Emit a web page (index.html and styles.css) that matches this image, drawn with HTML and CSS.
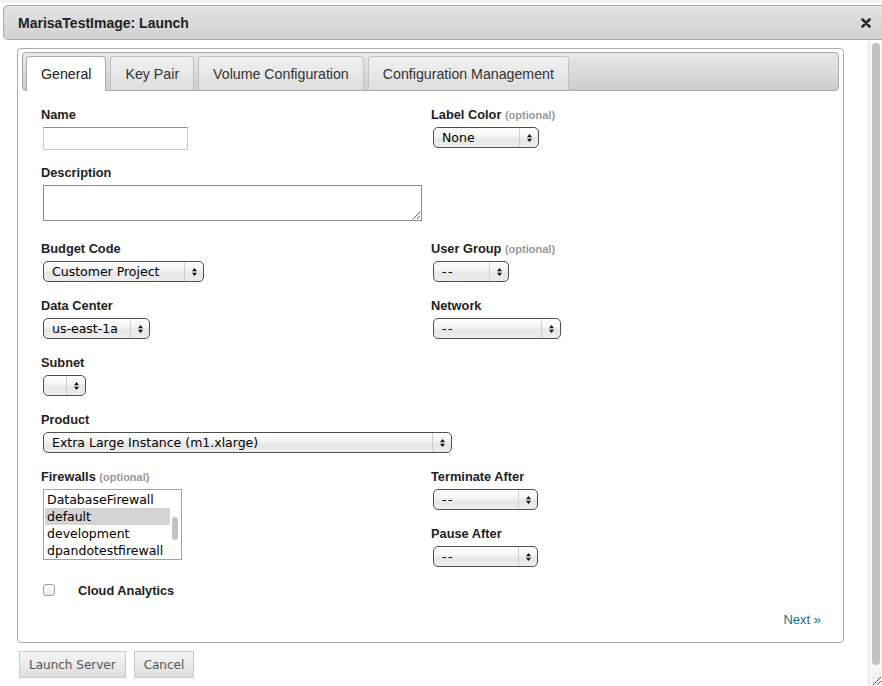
FILE: index.html
```html
<!DOCTYPE html>
<html>
<head>
<meta charset="utf-8">
<title>MarisaTestImage: Launch</title>
<link rel="stylesheet" href="styles.css">
</head>
<body>
<div class="top-strip"></div>
<div class="titlebar">
  <span class="title">MarisaTestImage: Launch</span>
  <svg class="close" width="10" height="10" viewBox="0 0 10 10"><path d="M1.5 1.5 L8.5 8.5 M8.5 1.5 L1.5 8.5" stroke="#2b2b2b" stroke-width="2.6" stroke-linecap="round"/></svg>
</div>
<div class="main">
  <div class="content">
    <div class="panel">
      <div class="tabbar">
        <div class="tab active">General</div>
        <div class="tab">Key Pair</div>
        <div class="tab">Volume Configuration</div>
        <div class="tab">Configuration Management</div>
      </div>
      <div class="form">
        <div class="row r1">
          <div class="col-l">
            <div class="lbl">Name</div>
            <input class="text-in" type="text">
          </div>
          <div class="col-r">
            <div class="lbl">Label Color <span class="opt">(optional)</span></div>
            <div class="sel w-label"><span class="val">None</span><span class="arr"><svg width="7" height="10" viewBox="0 0 7 10"><path d="M3.5 1 L6 4.3 H1 Z M1 5.7 H6 L3.5 9 Z" fill="#111"/></svg></span></div>
          </div>
        </div>
        <div class="row r2">
          <div class="col-l">
            <div class="lbl">Description</div>
            <textarea class="desc"></textarea>
          </div>
        </div>
        <div class="row">
          <div class="col-l">
            <div class="lbl">Budget Code</div>
            <div class="sel w-budget"><span class="val">Customer Project</span><span class="arr"><svg width="7" height="10" viewBox="0 0 7 10"><path d="M3.5 1 L6 4.3 H1 Z M1 5.7 H6 L3.5 9 Z" fill="#111"/></svg></span></div>
          </div>
          <div class="col-r">
            <div class="lbl">User Group <span class="opt">(optional)</span></div>
            <div class="sel w-group"><span class="val dash">--</span><span class="arr"><svg width="7" height="10" viewBox="0 0 7 10"><path d="M3.5 1 L6 4.3 H1 Z M1 5.7 H6 L3.5 9 Z" fill="#111"/></svg></span></div>
          </div>
        </div>
        <div class="row">
          <div class="col-l">
            <div class="lbl">Data Center</div>
            <div class="sel w-dc"><span class="val">us-east-1a</span><span class="arr"><svg width="7" height="10" viewBox="0 0 7 10"><path d="M3.5 1 L6 4.3 H1 Z M1 5.7 H6 L3.5 9 Z" fill="#111"/></svg></span></div>
          </div>
          <div class="col-r">
            <div class="lbl">Network</div>
            <div class="sel w-net"><span class="val dash">--</span><span class="arr"><svg width="7" height="10" viewBox="0 0 7 10"><path d="M3.5 1 L6 4.3 H1 Z M1 5.7 H6 L3.5 9 Z" fill="#111"/></svg></span></div>
          </div>
        </div>
        <div class="row">
          <div class="col-l">
            <div class="lbl">Subnet</div>
            <div class="sel w-subnet"><span class="val"></span><span class="arr"><svg width="7" height="10" viewBox="0 0 7 10"><path d="M3.5 1 L6 4.3 H1 Z M1 5.7 H6 L3.5 9 Z" fill="#111"/></svg></span></div>
          </div>
        </div>
        <div class="row r6">
          <div class="col-full">
            <div class="lbl">Product</div>
            <div class="sel w-product"><span class="val">Extra Large Instance (m1.xlarge)</span><span class="arr"><svg width="7" height="10" viewBox="0 0 7 10"><path d="M3.5 1 L6 4.3 H1 Z M1 5.7 H6 L3.5 9 Z" fill="#111"/></svg></span></div>
          </div>
        </div>
        <div class="row r7">
          <div class="col-l">
            <div class="lbl">Firewalls <span class="opt">(optional)</span></div>
            <div class="listbox">
              <div class="lb-items">
                <div class="lb-item">DatabaseFirewall</div>
                <div class="lb-item selected">default</div>
                <div class="lb-item">development</div>
                <div class="lb-item">dpandotestfirewall</div>
              </div>
              <div class="lb-track"><div class="lb-thumb"></div></div>
            </div>
          </div>
          <div class="col-r">
            <div class="lbl">Terminate After</div>
            <div class="sel w-term"><span class="val dash">--</span><span class="arr"><svg width="7" height="10" viewBox="0 0 7 10"><path d="M3.5 1 L6 4.3 H1 Z M1 5.7 H6 L3.5 9 Z" fill="#111"/></svg></span></div>
            <div class="lbl lbl-gap">Pause After</div>
            <div class="sel w-term"><span class="val dash">--</span><span class="arr"><svg width="7" height="10" viewBox="0 0 7 10"><path d="M3.5 1 L6 4.3 H1 Z M1 5.7 H6 L3.5 9 Z" fill="#111"/></svg></span></div>
          </div>
        </div>
        <div class="row check-row">
          <span class="checkbox"></span>
          <span class="check-lbl">Cloud Analytics</span>
        </div>
        <div class="next-row"><a class="next">Next »</a></div>
      </div>
    </div>
    <div class="buttons">
      <button class="btn">Launch Server</button>
      <button class="btn">Cancel</button>
    </div>
  </div>
  <div class="vscroll">
    <div class="vthumb"></div>
    <svg class="grip" width="12" height="12" viewBox="0 0 12 12"><path d="M11 3 L3 11 M11 7 L7 11" stroke="#555" stroke-width="1"/></svg>
  </div>
</div>
</body>
</html>
```
FILE: styles.css
```css
* { box-sizing: border-box; }
html, body { margin: 0; padding: 0; }
body {
  width: 882px;
  height: 686px;
  overflow: hidden;
  background: #fff;
  font-family: "Liberation Sans", Arial, sans-serif;
  color: #222;
}
.top-strip {
  height: 5px;
  border-top: 3px solid #f3f3f3;
}
.titlebar {
  margin-left: 3px;
  height: 35px;
  border: 1px solid #a9a9a9;
  border-right: none;
  border-radius: 5px 0 0 5px;
  background: linear-gradient(#e4e4e4, #d1d1d1);
  display: flex;
  align-items: center;
  justify-content: space-between;
  padding: 0 11px 0 14px;
}
.title {
  font-weight: bold;
  font-size: 14px;
  color: #222;
}
.close { display: block; margin-top: 1px; }
.main {
  display: flex;
  height: 646px;
}
.content {
  flex: 1;
  padding: 8px 0 0 17px;
}
.panel {
  width: 827px;
  border: 1px solid #aaa;
  border-radius: 4px;
  padding: 3px 4px 0;
}
.tabbar {
  display: flex;
  align-items: flex-end;
  gap: 4px;
  height: 39px;
  padding: 3px 3px 0;
  border: 1px solid #aaa;
  border-radius: 4px;
  background: linear-gradient(#e9e9e9, #cdcdcd);
}
.tab {
  height: 34px;
  padding: 0 14px;
  display: flex;
  align-items: center;
  font-size: 14.2px;
  color: #333;
  border: 1px solid #c2c2c2;
  border-bottom: none;
  border-radius: 4px 4px 0 0;
  background: linear-gradient(#f1f1f1, #dedede);
}
.tab.active {
  height: 35px;
  margin-bottom: -1px;
  background: #fff;
  border-color: #aaa;
  color: #222;
}
.form {
  padding: 14px 18px 14px 19px;
}
.row { display: flex; margin-bottom: 14px; }
.r1 { margin-bottom: 13px; }
.r2 { margin-bottom: 18px; }
.r6 { margin-bottom: 14px; }
.r7 { margin-bottom: 16px; }
.col-l { width: 390px; }
.col-r { flex: 1; }
.lbl {
  height: 18px;
  font-size: 12.8px;
  font-weight: bold;
  line-height: 17px;
  padding-top: 1px;
  margin-bottom: 4px;
  color: #222;
  white-space: nowrap;
}
.lbl-gap { margin-top: 14px; }
.opt {
  font-size: 11px;
  line-height: 10px;
  color: #999;
}
.text-in {
  display: block;
  margin: 0 0 0 2px;
  width: 145px;
  height: 23px;
  border: 1px solid #c9c9c9;
  border-top-color: #8f8f8f;
  padding: 2px 4px;
  font-size: 12px;
  outline: none;
}
.desc {
  display: block;
  margin: 0 0 0 2px;
  width: 379px;
  height: 36px;
  border: 1px solid #8a8a8a;
  padding: 2px;
  font-size: 12px;
  font-family: "DejaVu Sans", sans-serif;
  outline: none;
}
.sel {
  display: flex;
  align-items: stretch;
  margin-left: 2px;
  height: 21px;
  border: 1px solid #4f4f4f;
  border-radius: 5px;
  background: linear-gradient(#ffffff 0%, #f6f6f6 40%, #e6e6e6 60%, #eeeeee 100%);
  font-family: "DejaVu Sans", sans-serif;
  font-size: 12.5px;
  color: #000;
}
.sel .val {
  flex: 1;
  padding: 1px 0 0 8px;
  line-height: 18px;
  white-space: nowrap;
  overflow: hidden;
}
.sel .dash { letter-spacing: 1.5px; }
.sel .arr {
  width: 19px;
  border-left: 1px solid #cfcfcf;
  display: flex;
  align-items: center;
  justify-content: center;
}
.sel .arr svg { display: block; }
.w-label { width: 106px; }
.w-budget { width: 161px; }
.w-group { width: 76px; }
.w-dc { width: 107px; }
.w-net { width: 128px; }
.w-subnet { width: 43px; }
.w-product { width: 409px; }
.w-term { width: 105px; }
.listbox {
  display: flex;
  margin-left: 2px;
  width: 139px;
  height: 71px;
  border: 1px solid #a3a3a3;
  overflow: hidden;
  font-family: "DejaVu Sans", sans-serif;
  font-size: 12.5px;
  color: #000;
}
.lb-items { flex: 1; padding: 1px 0 0 1px; }
.lb-item {
  height: 17px;
  line-height: 17px;
  padding-left: 2px;
  white-space: nowrap;
}
.lb-item.selected { background: #d4d4d4; }
.lb-track { width: 11px; }
.lb-thumb {
  width: 6px;
  height: 23px;
  margin: 27px 0 0 2px;
  border-radius: 3px;
  background: #c3c3c3;
}
.check-row {
  align-items: center;
  height: 14px;
  margin: 0;
}
.checkbox {
  display: block;
  width: 12px;
  height: 12px;
  margin-left: 2px;
  border: 1px solid #a0a0a0;
  border-radius: 3px;
  background: linear-gradient(#ffffff, #e9e9e9);
}
.check-lbl {
  margin-left: 23px;
  font-size: 12.8px;
  font-weight: bold;
  color: #222;
}
.next-row {
  margin-top: 14px;
  text-align: right;
  line-height: 16px;
}
.next {
  font-size: 13px;
  color: #1c6c88;
}
.buttons {
  display: flex;
  gap: 8px;
  margin: 8px 0 0 2px;
}
.btn {
  height: 27px;
  padding: 0 9px;
  border: 1px solid #c9c9c9;
  background: linear-gradient(#f6f6f6, #dedede);
  font-family: "DejaVu Sans", sans-serif;
  font-size: 12px;
  color: #555;
  border-radius: 0;
}
.vscroll {
  width: 14px;
  margin-top: 2px;
  border-left: 1px solid #e2e2e2;
  background: #f6f6f6;
  display: flex;
  flex-direction: column;
  align-items: flex-start;
}
.vthumb {
  width: 8px;
  height: 622px;
  margin: 1px 0 0 3px;
  border-radius: 4px;
  background: #c2c2c2;
}
.grip {
  display: block;
  margin-top: auto;
  margin-left: 1px;
}
```
